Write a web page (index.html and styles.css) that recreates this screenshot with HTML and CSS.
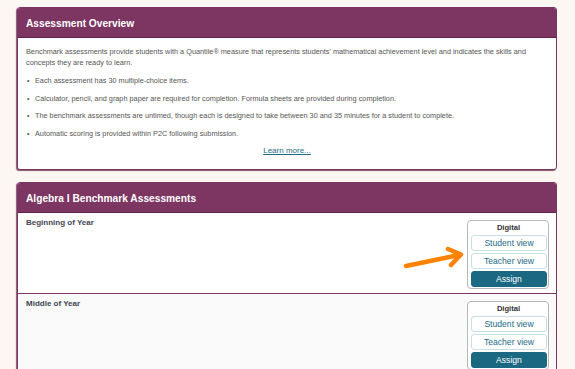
FILE: index.html
```html
<!DOCTYPE html>
<html>
<head>
<meta charset="utf-8">
<link rel="stylesheet" href="styles.css">
</head>
<body>
<div class="page">
  <section class="card">
    <h2 class="card-title">Assessment Overview</h2>
    <div class="card-body">
      <p class="intro">Benchmark assessments provide students with a Quantile® measure that represents students' mathematical achievement level and indicates the skills and concepts they are ready to learn.</p>
      <ul class="facts">
        <li>Each assessment has 30 multiple-choice items.</li>
        <li>Calculator, pencil, and graph paper are required for completion. Formula sheets are provided during completion.</li>
        <li>The benchmark assessments are untimed, though each is designed to take between 30 and 35 minutes for a student to complete.</li>
        <li>Automatic scoring is provided within P2C following submission.</li>
      </ul>
      <div class="more"><a href="#">Learn more...</a></div>
    </div>
  </section>

  <section class="card card-list">
    <h2 class="card-title">Algebra I Benchmark Assessments</h2>
    <div class="row">
      <div class="row-label">Beginning of Year</div>
      <div class="digital">
        <div class="digital-title">Digital</div>
        <button class="btn">Student view</button>
        <button class="btn">Teacher view</button>
        <button class="btn btn-primary">Assign</button>
      </div>
      <svg class="arrow" width="64" height="26" viewBox="0 0 64 26">
        <path d="M3 20 L56 9" stroke="#ff8200" stroke-width="4.5" stroke-linecap="round" fill="none"/>
        <path d="M45 3 L58 8.5 L48 19" stroke="#ff8200" stroke-width="4.5" stroke-linecap="round" stroke-linejoin="round" fill="none"/>
      </svg>
    </div>
    <div class="row row-alt">
      <div class="row-label">Middle of Year</div>
      <div class="digital">
        <div class="digital-title">Digital</div>
        <button class="btn">Student view</button>
        <button class="btn">Teacher view</button>
        <button class="btn btn-primary">Assign</button>
      </div>
    </div>
  </section>
</div>
</body>
</html>
```

FILE: styles.css
```css
* { box-sizing: border-box; }
html, body { margin: 0; padding: 0; }
body {
  background: #fdf7f4;
  font-family: "Liberation Sans", Arial, sans-serif;
  color: #555;
  overflow: hidden;
}
.page {
  padding: 7px 18px 0 17px;
  display: flex;
  flex-direction: column;
  gap: 12px;
}
.card {
  background: #fff;
  border: 1px solid #7b3562;
  border-radius: 3px;
  box-shadow: -1px 1px 1px rgba(80, 20, 60, 0.7);
  overflow: hidden;
}
.card-title {
  margin: 0;
  height: 30px;
  background: #7d3562;
  color: #fff;
  font-size: 10.2px;
  font-weight: bold;
  line-height: 29px;
  padding: 1px 8px 0 8px;
  border-bottom: 1px solid #5e2449;
}
.card-body {
  padding: 8px 8px 12px 8px;
  font-size: 7.3px;
  line-height: 11px;
  color: #555;
}
.intro { margin: 0 0 7px 0; }
.facts {
  margin: 0;
  padding: 0 0 0 1px;
  list-style: none;
}
.facts li {
  margin-bottom: 6.6px;
  display: flex;
}
.facts li::before {
  content: "\2022";
  display: inline-block;
  width: 8px;
  flex: none;
  font-size: 7px;
}
.more {
  text-align: center;
  margin-top: 6px;
  font-size: 8px;
  line-height: 12px;
}
.more a { color: #1d6a87; }

.card-list { height: 250px; }
.row {
  position: relative;
  display: flex;
  justify-content: space-between;
  align-items: flex-start;
  padding: 7px 7px 4px 8px;
  border-bottom: 1px solid #7b3562;
}
.row:last-child { border-bottom: none; }
.row-alt { background: #fafafa; }
.row-label {
  font-size: 8px;
  font-weight: bold;
  color: #3f4452;
  line-height: 10px;
  margin-top: -2px;
}
.digital {
  width: 82px;
  border: 1px solid #b8b8b8;
  border-radius: 4px;
  background: #fff;
  padding: 2px 2px 1px 3px;
  display: flex;
  flex-direction: column;
  gap: 2px;
}
.digital-title {
  text-align: center;
  font-size: 7.6px;
  font-weight: bold;
  color: #333;
  line-height: 10px;
}
.btn {
  height: 16px;
  width: 76px;
  border: 1px solid #c8dfe6;
  border-radius: 3px;
  background: #fff;
  color: #1d6a87;
  font-family: "Liberation Sans", Arial, sans-serif;
  font-size: 8.6px;
  padding: 0;
  line-height: 14px;
}
.btn-primary {
  background: #1b6883;
  border-color: #1b6883;
  color: #fff;
}
.arrow {
  position: absolute;
  left: 385px;
  top: 33px;
}
```
